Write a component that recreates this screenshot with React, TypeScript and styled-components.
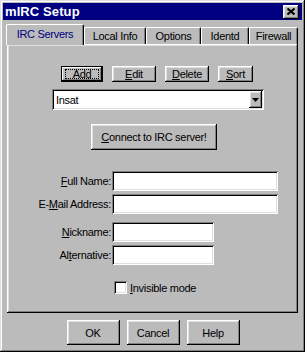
import React from 'react';
import styled, { createGlobalStyle } from 'styled-components';

const face = '#bbbbbb';
const light = '#dfdfdf';
const shadow = '#808080';

const GlobalStyle = createGlobalStyle`
  body {
    margin: 0;
    background: ${face};
    font-family: "Liberation Sans", Arial, sans-serif;
    font-size: 11px;
    letter-spacing: -0.3px;
    color: #000;
  }
`;

const raised = `
  box-shadow: inset -1px -1px #000, inset 1px 1px #fff,
    inset -2px -2px ${shadow}, inset 2px 2px ${light};
`;

const sunken = `
  box-shadow: inset 1px 1px ${shadow}, inset -1px -1px #fff,
    inset 2px 2px #000, inset -2px -2px ${light};
`;

const Window = styled.div`
  width: 305px;
  height: 352px;
  box-sizing: border-box;
  padding: 3px;
  background: ${face};
  display: flex;
  flex-direction: column;
  box-shadow: inset -1px -1px #000, inset 1px 1px ${light},
    inset -2px -2px ${shadow}, inset 2px 2px #fff;
`;

const TitleBar = styled.div`
  height: 17px;
  background: #000080;
  display: flex;
  align-items: center;
  justify-content: space-between;
  padding: 0 3px 0 2px;
`;

const Title = styled.span`
  color: #fff;
  font-weight: bold;
  font-size: 13px;
  letter-spacing: 0.1px;
`;

const CloseButton = styled.button`
  width: 16px;
  height: 14px;
  padding: 0;
  border: none;
  background: ${face};
  display: flex;
  align-items: center;
  justify-content: center;
  ${raised}
`;

const TabStrip = styled.div`
  margin-top: 4px;
  height: 20px;
  padding-left: 3px;
  display: flex;
  align-items: flex-end;
  position: relative;
  z-index: 1;
`;

const Tab = styled.div<{ $w: number; $active?: boolean }>`
  width: ${({ $w }) => $w}px;
  height: ${({ $active }) => ($active ? 21 : 17)}px;
  margin-bottom: ${({ $active }) => ($active ? -1 : 0)}px;
  box-sizing: border-box;
  display: flex;
  align-items: center;
  justify-content: center;
  padding-bottom: ${({ $active }) => ($active ? 2 : 0)}px;
  background: ${face};
  color: ${({ $active }) => ($active ? '#000080' : '#000')};
  border-top: 1px solid #fff;
  border-left: 1px solid #fff;
  border-right: 1px solid #000;
  border-radius: 2px 2px 0 0;
  box-shadow: inset -1px 0 ${shadow};
`;

const Panel = styled.div`
  margin: 0 4px;
  height: 269px;
  box-sizing: border-box;
  display: flex;
  flex-direction: column;
  box-shadow: inset -1px -1px #000, inset 1px 1px #fff,
    inset -2px -2px ${shadow}, inset 2px 2px ${light};
`;

const Row = styled.div<{ $top: number; $left: number; $gap?: number }>`
  display: flex;
  align-items: center;
  margin-top: ${({ $top }) => $top}px;
  margin-left: ${({ $left }) => $left}px;
  gap: ${({ $gap }) => $gap ?? 0}px;
`;

const Button = styled.button<{ $w: number; $h: number; $default?: boolean }>`
  position: relative;
  width: ${({ $w }) => $w}px;
  height: ${({ $h }) => $h}px;
  padding: 0;
  border: none;
  background: ${face};
  font: inherit;
  letter-spacing: inherit;
  color: #000;
  ${raised}
  ${({ $default }) =>
    $default &&
    `
    box-shadow: inset -1px -1px #000, inset 1px 1px #000,
      inset -2px -2px #000, inset 2px 2px #fff,
      inset -3px -3px ${shadow};
    &::after {
      content: '';
      position: absolute;
      inset: 3px 4px 3px 4px;
      border: 1px dotted #000;
    }
  `}
`;

const U = styled.span`
  text-decoration: underline;
  text-underline-offset: 1px;
`;

const Combo = styled.div`
  width: 212px;
  height: 21px;
  box-sizing: border-box;
  padding: 2px;
  background: #fff;
  display: flex;
  align-items: center;
  ${sunken}
`;

const ComboText = styled.span`
  flex: 1;
  padding-left: 2px;
`;

const ComboArrow = styled.div`
  width: 13px;
  height: 17px;
  background: ${face};
  display: flex;
  align-items: center;
  justify-content: center;
  ${raised}
`;

const Form = styled.div<{ $top: number; $field: number }>`
  display: grid;
  grid-template-columns: 104px ${({ $field }) => $field}px;
  column-gap: 1px;
  row-gap: 3px;
  margin-top: ${({ $top }) => $top}px;
  align-items: center;
`;

const Label = styled.label`
  text-align: right;
`;

const Input = styled.div`
  height: 20px;
  background: #fff;
  ${sunken}
`;

const CheckBox = styled.div`
  width: 13px;
  height: 13px;
  box-sizing: border-box;
  background: #fff;
  ${sunken}
`;

const Footer = styled.div`
  display: flex;
  justify-content: center;
  gap: 7px;
  margin-top: 7px;
  padding-left: 1px;
`;

const tabs = [
  { label: 'IRC Servers', w: 78, active: true },
  { label: 'Local Info', w: 62 },
  { label: 'Options', w: 55 },
  { label: 'Identd', w: 48 },
  { label: 'Firewall', w: 49 },
];

export default function App() {
  return (
    <>
      <GlobalStyle />
      <Window>
        <TitleBar>
          <Title>mIRC Setup</Title>
          <CloseButton>
            <svg width="8" height="7" viewBox="0 0 8 7">
              <path d="M0.5 0.5 L7.5 6.5 M7.5 0.5 L0.5 6.5" stroke="#000" strokeWidth="2" />
            </svg>
          </CloseButton>
        </TitleBar>

        <TabStrip>
          {tabs.map((t) => (
            <Tab key={t.label} $w={t.w} $active={t.active}>
              {t.label}
            </Tab>
          ))}
        </TabStrip>

        <Panel>
          <Row $top={22} $left={54} $gap={9}>
            <Button $w={42} $h={16} $default>Add</Button>
            <Button $w={44} $h={16}><U>E</U>dit</Button>
            <Button $w={44} $h={16}><U>D</U>elete</Button>
            <Button $w={35} $h={16}><U>S</U>ort</Button>
          </Row>

          <Row $top={7} $left={45}>
            <Combo>
              <ComboText>Insat</ComboText>
              <ComboArrow>
                <svg width="7" height="4" viewBox="0 0 7 4">
                  <polygon points="0,0 7,0 3.5,4" fill="#000" />
                </svg>
              </ComboArrow>
            </Combo>
          </Row>

          <Row $top={14} $left={84}>
            <Button $w={126} $h={26}><U>C</U>onnect to IRC server!</Button>
          </Row>

          <Form $top={21} $field={166}>
            <Label><U>F</U>ull Name:</Label>
            <Input />
            <Label>E-<U>M</U>ail Address:</Label>
            <Input />
          </Form>

          <Form $top={8} $field={102}>
            <Label><U>N</U>ickname:</Label>
            <Input />
            <Label>Al<U>t</U>ernative:</Label>
            <Input />
          </Form>

          <Row $top={16} $left={107} $gap={3}>
            <CheckBox />
            <span><U>I</U>nvisible mode</span>
          </Row>
        </Panel>

        <Footer>
          <Button $w={53} $h={25}>OK</Button>
          <Button $w={53} $h={25}>Cancel</Button>
          <Button $w={53} $h={25}>Help</Button>
        </Footer>
      </Window>
    </>
  );
}
